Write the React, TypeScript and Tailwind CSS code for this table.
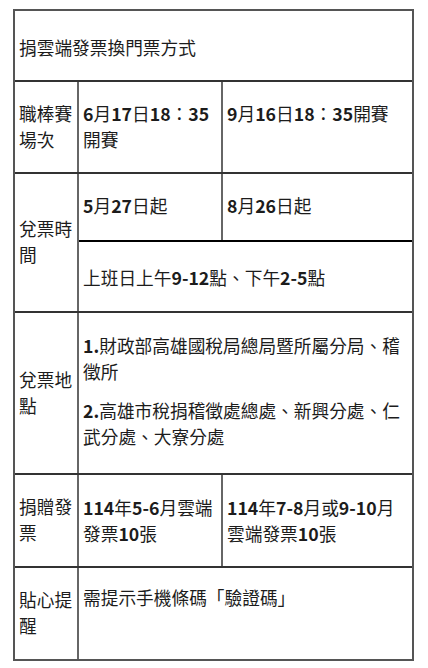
import React from 'react'

// digits (and "1." / "9-12") are rendered heavier, as in the source
const T = ({ s }: { s: string }) => {
  const parts = s.split(/([0-9]+(?:[-.][0-9]*)*)/)
  return (
    <>
      {parts.map((p, i) =>
        /^[0-9]/.test(p) ? (
          <span key={i} className="font-semibold">{p}</span>
        ) : (
          <React.Fragment key={i}>{p}</React.Fragment>
        )
      )}
    </>
  )
}

const Lines = ({ lines }: { lines: string[] }) => (
  <div>
    {lines.map((l, i) => (
      <div key={i} className="whitespace-nowrap">
        <T s={l} />
      </div>
    ))}
  </div>
)

const Head = ({ lines }: { lines: string[] }) => (
  <div className="w-[64px] shrink-0 border-r-2 border-[#666] pl-[4px] pb-[3px] flex items-center">
    <Lines lines={lines} />
  </div>
)

export default function App() {
  return (
    <div
      className="min-h-screen bg-white pt-[9px] pl-[13px] text-[#1c1c1c] text-[17.7px] leading-[26px]"
      style={{ fontFamily: '"Noto Sans CJK TC", "Noto Sans", sans-serif' }}
    >
      <div className="w-[401px] border-2 border-[#555] flex flex-col">
        {/* title */}
        <div className="h-[69px] pl-[4px] pt-[23px]">捐雲端發票換門票方式</div>

        {/* 職棒賽場次 */}
        <div className="h-[92px] border-t-2 border-[#333] flex">
          <Head lines={['職棒賽', '場次']} />
          <div className="w-[144px] shrink-0 border-r-2 border-[#666] pl-[4px] pt-[18px]">
            <Lines lines={['6月17日18：35', '開賽']} />
          </div>
          <div className="flex-1 pl-[4px] pt-[18px]">
            <Lines lines={['9月16日18：35開賽']} />
          </div>
        </div>

        {/* 兌票時間 */}
        <div className="h-[139px] border-t-2 border-[#333] flex">
          <Head lines={['兌票時', '間']} />
          <div className="flex-1 flex flex-col">
            <div className="h-[66px] flex">
              <div className="w-[144px] shrink-0 border-r-2 border-[#666] pl-[4px] pt-[18px]">
                <Lines lines={['5月27日起']} />
              </div>
              <div className="flex-1 pl-[4px] pt-[18px]">
                <Lines lines={['8月26日起']} />
              </div>
            </div>
            <div className="flex-1 border-t-2 border-black pl-[4px] pt-[22px]">
              <Lines lines={['上班日上午9-12點、下午2-5點']} />
            </div>
          </div>
        </div>

        {/* 兌票地點 */}
        <div className="h-[162px] border-t-2 border-[#333] flex">
          <Head lines={['兌票地', '點']} />
          <div className="flex-1 pl-[4px] pt-[19px] flex flex-col gap-[13px]">
            <Lines lines={['1.財政部高雄國稅局總局暨所屬分局、稽', '徵所']} />
            <Lines lines={['2.高雄市稅捐稽徵處總處、新興分處、仁', '武分處、大寮分處']} />
          </div>
        </div>

        {/* 捐贈發票 */}
        <div className="h-[93px] border-t-2 border-[#333] flex">
          <Head lines={['捐贈發', '票']} />
          <div className="w-[144px] shrink-0 border-r-2 border-[#666] pl-[4px] pt-[19px]">
            <Lines lines={['114年5-6月雲端', '發票10張']} />
          </div>
          <div className="flex-1 pl-[4px] pt-[19px]">
            <Lines lines={['114年7-8月或9-10月', '雲端發票10張']} />
          </div>
        </div>

        {/* 貼心提醒 */}
        <div className="h-[93px] border-t-2 border-[#333] flex">
          <Head lines={['貼心提', '醒']} />
          <div className="flex-1 pl-[4px] pt-[16px]">
            <Lines lines={['需提示手機條碼「驗證碼」']} />
          </div>
        </div>
      </div>
    </div>
  )
}
